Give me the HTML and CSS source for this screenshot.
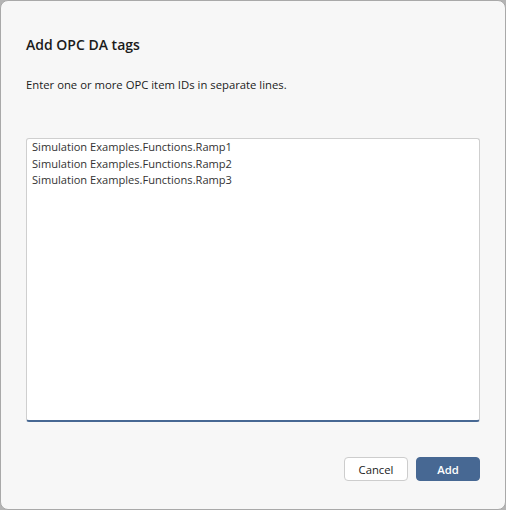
FILE: index.html
```html
<!DOCTYPE html>
<html>
<head>
<meta charset="utf-8">
<link rel="stylesheet" href="styles.css">
</head>
<body>
<div class="dialog">
  <h1 class="title">Add OPC DA tags</h1>
  <p class="desc">Enter one or more OPC item IDs in separate lines.</p>
  <textarea class="ids" spellcheck="false">Simulation Examples.Functions.Ramp1
Simulation Examples.Functions.Ramp2
Simulation Examples.Functions.Ramp3</textarea>
  <div class="actions">
    <button class="btn btn-secondary">Cancel</button>
    <button class="btn btn-primary">Add</button>
  </div>
</div>
</body>
</html>
```
FILE: styles.css
```css
html, body {
  margin: 0;
  padding: 0;
  background: #b4b4b4;
}
.dialog {
  box-sizing: border-box;
  width: 506px;
  height: 510px;
  background: #f7f7f7;
  border: 1px solid #a9a9a9;
  border-radius: 8px;
  padding: 0 25px;
  display: flex;
  flex-direction: column;
  font-family: "Open Sans", "Noto Sans", sans-serif;
  color: #1b1b1b;
}
.title {
  margin: 33px 0 0;
  font-size: 14px;
  line-height: 22px;
  font-weight: 600;
}
.desc {
  margin: 21px 0 0;
  font-size: 11.3px;
  line-height: 16px;
}
.ids {
  box-sizing: border-box;
  margin: 45px 0 0;
  width: 454px;
  height: 284px;
  resize: none;
  background: #fff;
  border: 1px solid #cfcfcf;
  border-bottom: 2px solid #476893;
  border-radius: 3px;
  padding: 0 5px;
  font-family: "Open Sans", "Noto Sans", sans-serif;
  font-size: 11.1px;
  line-height: 16.5px;
  color: #333;
  outline: none;
}
.actions {
  margin-top: 35px;
  display: flex;
  justify-content: flex-end;
  gap: 8px;
}
.btn {
  box-sizing: border-box;
  width: 64px;
  height: 24px;
  border-radius: 4px;
  font-family: "Open Sans", "Noto Sans", sans-serif;
  font-size: 11.3px;
  padding: 0;
  cursor: pointer;
}
.btn-secondary {
  background: #fff;
  border: 1px solid #cdcdcd;
  color: #1b1b1b;
}
.btn-primary {
  background: #476893;
  border: 1px solid #476893;
  color: #fff;
  font-weight: 600;
}
```
